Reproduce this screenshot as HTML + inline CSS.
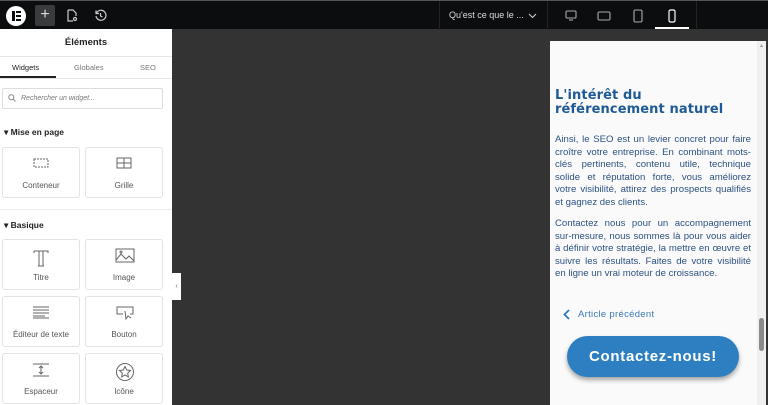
<!DOCTYPE html>
<html><head><meta charset="utf-8"><style>
*{box-sizing:border-box;margin:0;padding:0}
body{width:768px;height:405px;overflow:hidden;background:#333;font-family:"Liberation Sans",sans-serif;position:relative}
.top{position:absolute;left:0;top:0;width:768px;height:29px;background:#0c0d0e;border-top:1px solid #555}
.abs{position:absolute}
.panel{position:absolute;left:0;top:29px;width:172px;height:376px;background:#fff}
.card{position:absolute;width:78px;height:51px;border:1px solid #e2e3e5;border-radius:3px;background:#fff;text-align:center;font-size:8px;color:#555}
.card span{position:absolute;left:0;right:0;bottom:7px}
.card svg{position:absolute;left:29px;top:8px}
.sec{position:absolute;left:4px;font-size:8.5px;font-weight:bold;color:#222}
.prev{position:absolute;left:550px;top:41px;width:216px;height:364px;background:#fafafa}
.p{position:absolute;left:5px;width:196px;font-size:9.6px;line-height:12.6px;color:#2c5281;text-align:justify;font-family:"Liberation Sans",sans-serif;letter-spacing:0}
</style></head><body>
<div class="top">
  <div class="abs" style="left:6px;top:5px;width:20px;height:20px;border-radius:50%;background:#fff"></div>
  <div class="abs" style="left:12px;top:10px;width:2.5px;height:10px;background:#0c0d0e"></div>
  <div class="abs" style="left:15.5px;top:10px;width:5px;height:2px;background:#0c0d0e"></div>
  <div class="abs" style="left:15.5px;top:14px;width:5px;height:2px;background:#0c0d0e"></div>
  <div class="abs" style="left:15.5px;top:18px;width:5px;height:2px;background:#0c0d0e"></div>
  <div class="abs" style="left:35px;top:4px;width:20px;height:21px;background:#3a3b3d;border-radius:2px;color:#ddd;font-size:16px;text-align:center;line-height:20px">+</div>
  <svg class="abs" style="left:66px;top:8px" width="12" height="13" viewBox="0 0 12 13" fill="none" stroke="#ccc" stroke-width="1.2"><path d="M2 1h5l3 3v3M2 1v11h5"/><circle cx="9" cy="10" r="1.5"/></svg>
  <svg class="abs" style="left:94px;top:8px" width="13" height="13" viewBox="0 0 13 13" fill="none" stroke="#ccc" stroke-width="1.2"><path d="M2.5 4A5 5 0 1 1 2 7"/><path d="M2 1.5v3h3"/><path d="M6.5 4v3l2 1"/></svg>
  <div class="abs" style="left:439px;top:0;width:1px;height:29px;background:#222"></div>
  <div class="abs" style="left:449px;top:9px;font-size:9px;color:#ddd">Qu'est ce que le ...</div>
  <svg class="abs" style="left:528px;top:12px" width="9" height="6" viewBox="0 0 9 6" fill="none" stroke="#ccc" stroke-width="1.1"><path d="M1 1l3.5 3.5L8 1"/></svg>
  <div class="abs" style="left:547px;top:0;width:1px;height:29px;background:#222"></div>
  <svg class="abs" style="left:565px;top:9px" width="12" height="11" viewBox="0 0 12 11" fill="none" stroke="#aaa" stroke-width="1.1"><rect x="1" y="1" width="10" height="7" rx="1"/><path d="M4 10h4"/></svg>
  <svg class="abs" style="left:597px;top:10px" width="14" height="10" viewBox="0 0 14 10" fill="none" stroke="#aaa" stroke-width="1.1"><rect x="1" y="1" width="12" height="8" rx="1.5"/></svg>
  <svg class="abs" style="left:633px;top:8px" width="10" height="14" viewBox="0 0 10 14" fill="none" stroke="#aaa" stroke-width="1.1"><rect x="1" y="1" width="8" height="12" rx="1.5"/></svg>
  <svg class="abs" style="left:668px;top:8px" width="8" height="14" viewBox="0 0 8 14" fill="none" stroke="#fff" stroke-width="1.2"><rect x="1" y="1" width="6" height="12" rx="1.5"/></svg>
  <div class="abs" style="left:655px;top:26px;width:34px;height:2px;background:#fff"></div>
  <div class="abs" style="left:696px;top:0;width:1px;height:29px;background:#222"></div>
</div>
<div class="panel">
  <div class="abs" style="left:0;top:0;width:172px;height:28px;border-bottom:1px solid #e6e6e6;text-align:center;font-size:9.5px;font-weight:bold;line-height:28px;color:#222">Éléments</div>
  <div class="abs" style="left:0;top:28px;width:172px;height:22px;border-bottom:1px solid #e6e6e6;font-size:7.5px;color:#777">
    <span class="abs" style="left:12px;top:6px;color:#222">Widgets</span>
    <span class="abs" style="left:74px;top:6px">Globales</span>
    <span class="abs" style="left:140px;top:6px">SEO</span>
    <div class="abs" style="left:0;top:19px;width:56px;height:2px;background:#222"></div>
  </div>
  <div class="abs" style="left:2px;top:59px;width:161px;height:21px;border:1px solid #ddd;border-radius:2px;font-size:7px;font-style:italic;color:#777;line-height:19px;padding-left:18px">Rechercher un widget...</div>
  <svg class="abs" style="left:8px;top:65px" width="8" height="8" viewBox="0 0 8 8" fill="none" stroke="#888"><circle cx="3.3" cy="3.3" r="2.5"/><path d="M5 5l2.5 2.5"/></svg>
  <div class="sec" style="top:98px">▾ Mise en page</div>
  <div class="card" style="left:2px;top:118px"><svg width="18" height="14" viewBox="0 0 18 14" fill="none" stroke="#666" stroke-dasharray="2 1"><rect x="2" y="3" width="14" height="8"/></svg><span>Conteneur</span></div>
  <div class="card" style="left:85px;top:118px"><svg width="18" height="14" viewBox="0 0 18 14" fill="none" stroke="#666"><rect x="2" y="2" width="14" height="10"/><path d="M9 2v10M2 7h14"/></svg><span>Grille</span></div>
  <div class="abs" style="left:0;top:180px;width:172px;height:1px;background:#eee"></div>
  <div class="sec" style="top:191px">▾ Basique</div>
  <div class="card" style="left:2px;top:210px"><svg width="18" height="20" viewBox="0 0 18 20" fill="none" stroke="#666"><path d="M2 3h14v2M2 3v2M7 3v15h4V3M6 18h6"/></svg><span>Titre</span></div>
  <div class="card" style="left:85px;top:210px"><svg width="20" height="16" viewBox="0 0 20 16" fill="none" stroke="#666"><rect x="1" y="1" width="18" height="13"/><path d="M1 12l5-6 5 5 3-3 5 5"/><circle cx="6" cy="4" r="1"/></svg><span>Image</span></div>
  <div class="card" style="left:2px;top:267px"><svg width="18" height="14" viewBox="0 0 18 14" fill="none" stroke="#666"><path d="M1 2h16M1 5h16M1 8h16M1 11h12M1 13h16"/></svg><span>Éditeur de texte</span></div>
  <div class="card" style="left:85px;top:267px"><svg width="20" height="16" viewBox="0 0 20 16" fill="none" stroke="#666"><path d="M8 9H2V2h16v7h-3"/><path d="M10 6l1 8 2-3 3 2"/></svg><span>Bouton</span></div>
  <div class="card" style="left:2px;top:324px"><svg width="18" height="16" viewBox="0 0 18 16" fill="none" stroke="#666"><path d="M1 2h16M1 14h16M9 4v8M7 6l2-2 2 2M7 10l2 2 2-2"/></svg><span>Espaceur</span></div>
  <div class="card" style="left:85px;top:324px"><svg width="20" height="20" viewBox="0 0 20 20" fill="none" stroke="#666"><circle cx="10" cy="10" r="8.5"/><path d="M10 4.5l1.7 3.5 3.8.5-2.8 2.6.7 3.8-3.4-1.9-3.4 1.9.7-3.8L4.5 8.5l3.8-.5z"/></svg><span>Icône</span></div>
</div>
<div class="abs" style="left:172px;top:273px;width:9px;height:27px;background:#fff;font-size:7px;color:#666;text-align:center;line-height:27px">‹</div>
<div class="prev">
  <div class="abs" style="left:5px;top:48px;font-family:'DejaVu Sans',sans-serif;font-weight:bold;font-size:13px;line-height:14px;color:#1f5a96;letter-spacing:0.1px">L'intérêt du<br>référencement naturel</div>
  <div class="p" style="top:93px">Ainsi, le SEO est un levier concret pour faire croître votre entreprise. En combinant mots-clés pertinents, contenu utile, technique solide et réputation forte, vous améliorez votre visibilité, attirez des prospects qualifiés et gagnez des clients.</div>
  <div class="p" style="top:177px">Contactez nous pour un accompagnement sur-mesure, nous sommes là pour vous aider à définir votre stratégie, la mettre en œuvre et suivre les résultats. Faites de votre visibilité en ligne un vrai moteur de croissance.</div>
  <svg class="abs" style="left:13px;top:268px" width="7" height="11" viewBox="0 0 7 11" fill="none" stroke="#2e7bbf" stroke-width="1.8"><path d="M6 1L1.5 5.5 6 10"/></svg>
  <div class="abs" style="left:28px;top:268px;font-size:9.5px;color:#3a7ab8;font-family:'Liberation Sans',sans-serif;letter-spacing:0.3px">Article précédent</div>
  <div class="abs" style="left:17px;top:295px;width:172px;height:41px;border-radius:21px;background:#2e7fc1;box-shadow:0 3px 5px rgba(0,0,0,.35);color:#fff;font-family:'Liberation Sans',sans-serif;font-weight:bold;font-size:15px;text-align:center;line-height:41px;letter-spacing:0.7px">Contactez-nous!</div>
  <div class="abs" style="left:207px;top:0;width:9px;height:364px;background:#f0f0f0"></div>
  <div class="abs" style="left:209px;top:2px;font-size:5px;color:#999">▲</div>
  <div class="abs" style="left:209px;top:277px;width:5px;height:33px;border-radius:3px;background:#8a8a8a"></div>
</div>
</body></html>
